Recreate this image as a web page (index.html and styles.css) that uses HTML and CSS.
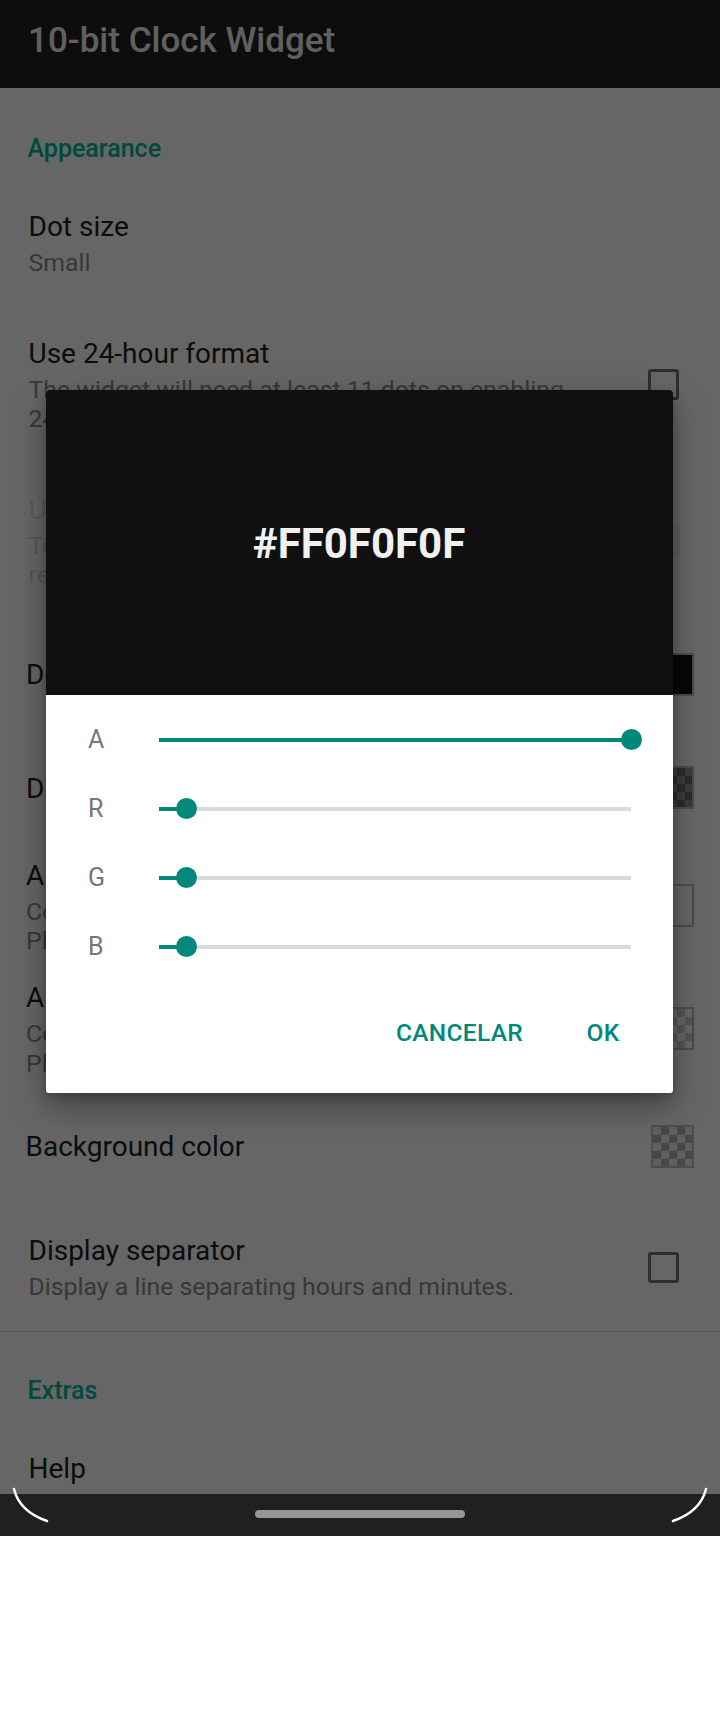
FILE: index.html
```html
<!DOCTYPE html>
<html lang="en">
<head>
<meta charset="utf-8">
<title>10-bit Clock Widget</title>
<link rel="stylesheet" href="styles.css">
</head>
<body>
<div class="screen">
  <div class="main">
    <header class="appbar">
      <h1 class="appbar-title">10-bit Clock Widget</h1>
    </header>
    <div class="prefs">
      <div class="category">Appearance</div>

      <div class="pref">
        <div class="pref-text">
          <div class="pref-title">Dot size</div>
          <div class="pref-summary">Small</div>
        </div>
      </div>

      <div class="pref">
        <div class="pref-text">
          <div class="pref-title">Use 24-hour format</div>
          <div class="pref-summary">The widget will need at least 11 dots on enabling <span class="nowrap">24-hour</span> format.</div>
        </div>
        <span class="checkbox"></span>
      </div>

      <div class="pref pref-disabled">
        <div class="pref-text">
          <div class="pref-title">Use leading zero</div>
          <div class="pref-summary">To enable this option, the 24-hour format is<br>required.</div>
        </div>
        <span class="checkbox"></span>
      </div>

      <div class="pref pref-color pref-single">
        <div class="pref-text">
          <div class="pref-title">Dot color (on)</div>
        </div>
        <span class="swatch swatch-edit"></span>
      </div>

      <div class="pref pref-color pref-single">
        <div class="pref-text">
          <div class="pref-title">Dot color (off)</div>
        </div>
        <span class="swatch swatch-dark-checker"></span>
      </div>

      <div class="pref pref-color">
        <div class="pref-text">
          <div class="pref-title">Alternative dot color (on)</div>
          <div class="pref-summary">Color used for lit dots on dark wallpapers.<br>Place the widget on a dark wallpaper to see it.</div>
        </div>
        <span class="swatch swatch-white"></span>
      </div>

      <div class="pref pref-color">
        <div class="pref-text">
          <div class="pref-title">Alternative dot color (off)</div>
          <div class="pref-summary">Color used for unlit dots on dark wallpapers.<br>Place the widget on a dark wallpaper to see it.</div>
        </div>
        <span class="swatch swatch-light-checker"></span>
      </div>

      <div class="pref pref-color pref-single pref-bg">
        <div class="pref-text">
          <div class="pref-title">Background color</div>
        </div>
        <span class="swatch swatch-checker"></span>
      </div>

      <div class="pref">
        <div class="pref-text">
          <div class="pref-title">Display separator</div>
          <div class="pref-summary">Display a line separating hours and minutes.</div>
        </div>
        <span class="checkbox"></span>
      </div>

      <div class="category category-divided">Extras</div>

      <div class="pref">
        <div class="pref-text">
          <div class="pref-title">Help</div>
        </div>
      </div>
    </div>

    <div class="scrim">
      <div class="dialog">
        <div class="dialog-header">
          <span class="hex">#FF0F0F0F</span>
        </div>
        <div class="dialog-body">
          <div class="slider-row">
            <span class="slider-label">A</span>
            <div class="slider"><div class="slider-fill" style="width: 100%"><span class="slider-thumb"></span></div></div>
          </div>
          <div class="slider-row">
            <span class="slider-label">R</span>
            <div class="slider"><div class="slider-fill" style="width: 5.88%"><span class="slider-thumb"></span></div></div>
          </div>
          <div class="slider-row">
            <span class="slider-label">G</span>
            <div class="slider"><div class="slider-fill" style="width: 5.88%"><span class="slider-thumb"></span></div></div>
          </div>
          <div class="slider-row">
            <span class="slider-label">B</span>
            <div class="slider"><div class="slider-fill" style="width: 5.88%"><span class="slider-thumb"></span></div></div>
          </div>
        </div>
        <div class="dialog-actions">
          <span class="dialog-button">CANCELAR</span>
          <span class="dialog-button">OK</span>
        </div>
      </div>
    </div>
  </div>

  <nav class="navbar"><span class="nav-handle"></span></nav>

  <svg class="corners" width="720" height="50" viewBox="0 0 720 50" aria-hidden="true">
    <path d="M14 9 Q19.5 31.6 47 41" />
    <path d="M706 9 Q700.5 31.6 673 41" />
  </svg>
</div>
</body>
</html>
```

FILE: styles.css
```css
* {
  box-sizing: border-box;
}

html, body {
  margin: 0;
  padding: 0;
  background: #ffffff;
}

body {
  width: 720px;
  font-family: Roboto, "Noto Sans", "Liberation Sans", sans-serif;
}

.nowrap {
  white-space: nowrap;
}

.screen {
  position: relative;
  width: 720px;
  height: 1536px;
  overflow: hidden;
}

.main {
  position: relative;
  height: 1494px;
  overflow: hidden;
  background: #ffffff;
}

/* App bar */
.appbar {
  height: 88px;
  padding: 19.5px 0 0 28px;
  background: #212121;
}

.appbar-title {
  margin: 0;
  font-size: 35px;
  line-height: 41px;
  font-weight: 500;
  color: #f0f0f0;
}

/* Preference list */
.category {
  padding: 46px 0 17px 27.5px;
  font-size: 25px;
  line-height: 29px;
  font-weight: 500;
  color: #00b79e;
}

.category-divided {
  border-top: 1px solid #dedede;
  padding-top: 44px;
}

.pref {
  display: flex;
  align-items: center;
  padding: 29px 0 29px 28.5px;
}

.pref-text {
  flex: 1;
  min-width: 0;
  margin-right: 30px;
}

.pref-title {
  font-size: 28px;
  line-height: 36px;
  color: #212121;
}

.pref-summary {
  margin-top: 3px;
  font-size: 24.8px;
  line-height: 29.5px;
  color: #8c8c8c;
}

.pref-disabled .pref-title {
  color: #e2e2e2;
}

.pref-disabled .pref-summary {
  color: #d8d8d8;
}

.pref-color {
  padding: 12px 0 12.5px 26px;
}

.pref-single {
  min-height: 113.6px;
  padding-top: 0;
  padding-bottom: 0;
}

.pref-bg {
  padding-left: 25.5px;
}

.checkbox {
  flex: none;
  width: 31px;
  height: 31px;
  margin-right: 41.5px;
  border: 3px solid #757575;
  border-radius: 3px;
}

.pref-disabled .checkbox {
  border-color: #ebebeb;
}

.swatch {
  flex: none;
  width: 43px;
  height: 43px;
  margin-right: 26px;
  margin-top: -2px;
  border: 2px solid #c0c0c0;
}

.swatch-edit {
  background: #0f0f0f;
}

.swatch-white {
  background: #ffffff;
}

.swatch-dark-checker {
  background: conic-gradient(#6b6b6b 25%, #969696 0 50%, #6b6b6b 0 75%, #969696 0) 0 0 / 16px 16px;
}

.swatch-light-checker {
  background: conic-gradient(#d5d5d5 25%, #ffffff 0 50%, #d5d5d5 0 75%, #ffffff 0) 0 0 / 16px 16px;
}

.swatch-checker {
  background: conic-gradient(#b3b3b3 25%, #eeeeee 0 50%, #b3b3b3 0 75%, #eeeeee 0) 0 0 / 16px 16px;
}

/* Dialog overlay */
.scrim {
  position: absolute;
  inset: 0;
  display: flex;
  align-items: center;
  justify-content: center;
  padding: 0 2px 11px 0;
  background: rgba(0, 0, 0, 0.6);
}

.dialog {
  width: 627px;
  border-radius: 3px;
  overflow: hidden;
  background: #ffffff;
  box-shadow: 0 14px 34px rgba(0, 0, 0, 0.35), 0 4px 10px rgba(0, 0, 0, 0.2);
}

.dialog-header {
  height: 305px;
  padding-top: 4px;
  display: flex;
  align-items: center;
  justify-content: center;
  background: #101010;
}

.hex {
  font-size: 42px;
  line-height: 48px;
  font-weight: 700;
  color: #f1f1f1;
}

.dialog-body {
  padding: 10.5px 41.5px 0 42.5px;
}

.slider-row {
  display: flex;
  align-items: center;
  height: 69px;
}

.slider-label {
  flex: none;
  width: 71px;
  font-size: 25px;
  line-height: 30px;
  color: #767676;
}

.slider {
  flex: 1;
  height: 4px;
  background: #dadada;
}

.slider-fill {
  position: relative;
  height: 100%;
  background: #00897b;
}

.slider-thumb {
  position: absolute;
  right: -10.5px;
  top: 50%;
  width: 21px;
  height: 21px;
  margin-top: -10.5px;
  border-radius: 50%;
  background: #00897b;
}

.dialog-actions {
  display: flex;
  justify-content: flex-end;
  gap: 10px;
  padding: 20px 13.5px 28.8px 0;
}

.dialog-button {
  display: flex;
  align-items: center;
  justify-content: center;
  min-width: 112px;
  height: 63px;
  padding: 0 14px;
  font-size: 24.5px;
  font-weight: 500;
  letter-spacing: 0.3px;
  color: #00897b;
}

/* Navigation bar */
.navbar {
  display: flex;
  align-items: center;
  justify-content: center;
  height: 42px;
  padding-bottom: 2px;
  background: #1e2021;
}

.nav-handle {
  width: 210px;
  height: 8px;
  border-radius: 4px;
  background: #959595;
}

.corners {
  position: absolute;
  left: 0;
  top: 1480px;
  fill: none;
  stroke: #ffffff;
  stroke-width: 2.5;
  stroke-linecap: round;
}
```
